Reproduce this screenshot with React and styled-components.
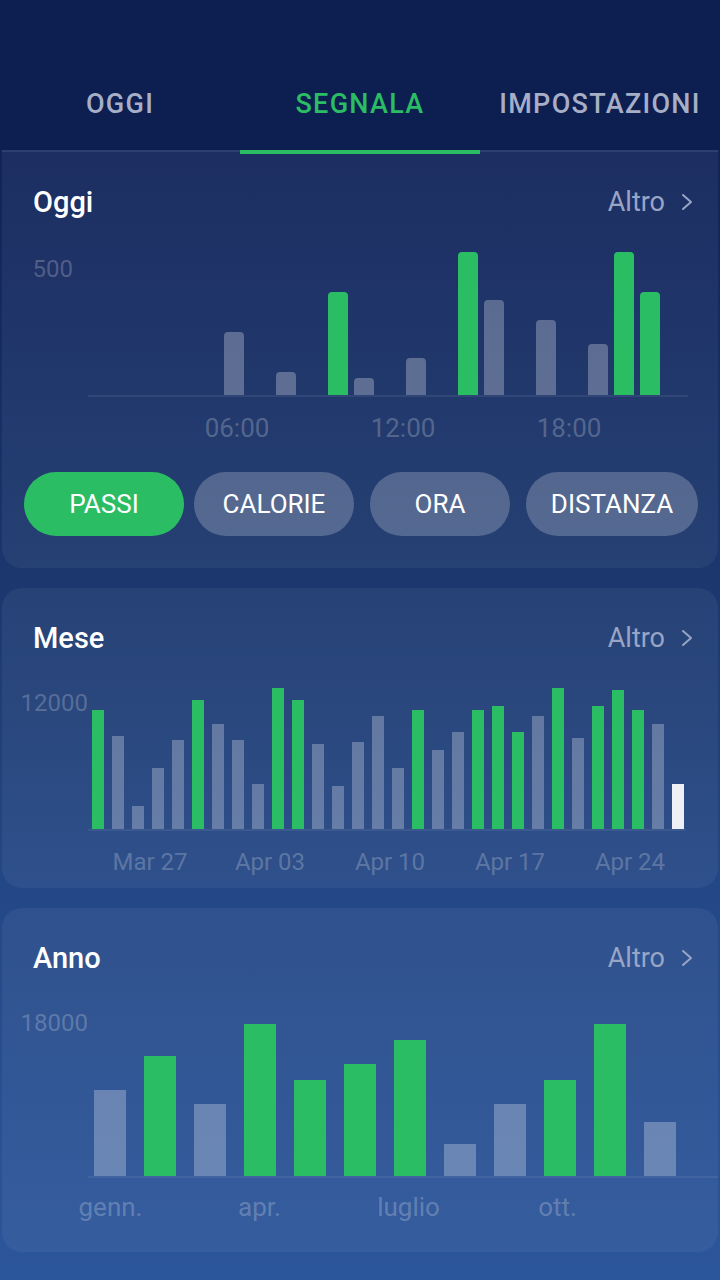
import React from "react";
import styled, { createGlobalStyle } from "styled-components";

const GREEN = "#2bbd63";

const GlobalStyle = createGlobalStyle`
  html, body {
    margin: 0;
    padding: 0;
    background: #0d1e51;
  }
  * {
    box-sizing: border-box;
  }
`;

const Page = styled.div`
  width: 720px;
  min-height: 1280px;
  font-family: Roboto, "Noto Sans", sans-serif;
  background: linear-gradient(
    180deg,
    #0d1e51 0px,
    #10235a 150px,
    #1b376d 575px,
    #244887 900px,
    #2c569b 1280px
  );
  overflow: hidden;
`;

const Header = styled.div`
  height: 150px;
  padding-top: 56px;
  background: #0d1e51;
  display: flex;
`;

const Tab = styled.div`
  position: relative;
  flex: 1;
  height: 94px;
  line-height: 96px;
  text-align: center;
  font-size: 27px;
  font-weight: 500;
  letter-spacing: 1.3px;
  color: ${(p) => (p.$active ? GREEN : "#a7afc6")};

  &::after {
    content: "";
    display: ${(p) => (p.$active ? "block" : "none")};
    position: absolute;
    left: 0;
    right: 0;
    bottom: -4px;
    height: 4px;
    background: ${GREEN};
  }
`;

const Card = styled.section`
  margin: ${(p) => (p.$first ? "0 2px" : "20px 2px 0")};
  padding: ${(p) => p.$pad};
  border-radius: ${(p) => (p.$first ? "0 0 20px 20px" : "20px")};
  background: rgba(255, 255, 255, 0.05);
  border-top: ${(p) => (p.$first ? "2px solid rgba(255,255,255,0.08)" : "none")};
`;

const TitleRow = styled.div`
  display: flex;
  justify-content: space-between;
  align-items: center;
  height: 40px;
  padding: 0 25px 0 31px;
`;

const Title = styled.h2`
  margin: 0;
  font-size: 29px;
  font-weight: 500;
  color: #ffffff;
`;

const More = styled.div`
  display: flex;
  align-items: center;
  gap: 16px;
  font-size: 27px;
  color: #98a5c6;
`;

const Chart = styled.div`
  display: flex;
  margin-top: ${(p) => p.$top}px;
  height: ${(p) => p.$height + 2}px;
`;

const Axis = styled.div`
  width: 86px;
  flex-shrink: 0;
  text-align: right;
  padding-right: ${(p) => p.$pr}px;
  font-size: 24px;
  line-height: 30px;
  color: rgba(255, 255, 255, 0.22);
`;

const AxisLabel = styled.div`
  margin-top: ${(p) => p.$offset}px;
`;

const Plot = styled.div`
  flex: 1;
  display: flex;
  align-items: flex-end;
  gap: ${(p) => p.$gap}px;
  padding-left: ${(p) => p.$pl}px;
  margin-right: ${(p) => p.$mr}px;
  border-bottom: 2px solid rgba(255, 255, 255, 0.07);
`;

const Bar = styled.div`
  flex-shrink: 0;
  width: ${(p) => p.$w}px;
  border-radius: ${(p) => (p.$round ? "4px 4px 0 0" : "0")};
  background: ${(p) =>
    p.$kind === "goal"
      ? GREEN
      : p.$kind === "today"
      ? "#eef0f5"
      : "rgba(255, 255, 255, 0.27)"};
`;

const Ticks = styled.div`
  display: flex;
  padding-left: ${(p) => p.$pl}px;
  padding-top: ${(p) => p.$pt}px;
  font-size: ${(p) => p.$size}px;
  line-height: 30px;
  color: rgba(255, 255, 255, 0.24);
`;

const Tick = styled.div`
  width: ${(p) => p.$w}px;
  text-align: center;
  flex-shrink: 0;
`;

const Pills = styled.div`
  display: flex;
  margin-top: 29px;
  padding-left: 22px;
`;

const Pill = styled.button`
  width: ${(p) => p.$w}px;
  height: 64px;
  margin-left: ${(p) => p.$ml}px;
  padding: 0;
  border: none;
  border-radius: 32px;
  font-family: Roboto, "Noto Sans", sans-serif;
  font-size: 26px;
  color: #ffffff;
  background: ${(p) => (p.$active ? GREEN : "rgba(255, 255, 255, 0.22)")};
`;

const Chevron = () => (
  <svg width="12" height="18" viewBox="0 0 12 18" fill="none">
    <path
      d="M2 2 L10 9 L2 16"
      stroke="#98a5c6"
      strokeWidth="2"
      strokeLinecap="round"
      strokeLinejoin="round"
    />
  </svg>
);

const CardHead = ({ title }) => (
  <TitleRow>
    <Title>{title}</Title>
    <More>
      Altro
      <Chevron />
    </More>
  </TitleRow>
);

// hourly steps, slots 0..21
const today = Array.from({ length: 22 }, () => ({ h: 0, kind: "rest" }));
[
  [5, 63, "rest"],
  [7, 23, "rest"],
  [9, 103, "goal"],
  [10, 17, "rest"],
  [12, 37, "rest"],
  [14, 143, "goal"],
  [15, 95, "rest"],
  [17, 75, "rest"],
  [19, 51, "rest"],
  [20, 143, "goal"],
  [21, 103, "goal"],
].forEach(([i, h, kind]) => (today[i] = { h, kind }));

const month = [
  [119, 1], [93], [23], [61], [89], [129, 1], [105], [89], [45], [141, 1],
  [129, 1], [85], [43], [87], [113], [61], [119, 1], [79], [97], [119, 1],
  [123, 1], [97, 1], [113], [141, 1], [91], [123, 1], [139, 1], [119, 1], [105], [45, 2],
].map(([h, g]) => ({ h, kind: g === 1 ? "goal" : g === 2 ? "today" : "rest" }));

const year = [
  [86], [120, 1], [72], [152, 1], [96, 1], [112, 1],
  [136, 1], [32], [72], [96, 1], [152, 1], [54],
].map(([h, g]) => ({ h, kind: g ? "goal" : "rest" }));

const filters = [
  { label: "PASSI", w: 160, ml: 0, active: true },
  { label: "CALORIE", w: 160, ml: 10 },
  { label: "ORA", w: 140, ml: 16 },
  { label: "DISTANZA", w: 172, ml: 16 },
];

export default function App() {
  return (
    <Page>
      <GlobalStyle />
      <Header>
        <Tab>OGGI</Tab>
        <Tab $active>SEGNALA</Tab>
        <Tab>IMPOSTAZIONI</Tab>
      </Header>

      <Card $first $pad="30px 0 32px">
        <CardHead title="Oggi" />
        <Chart $top={30} $height={143}>
          <Axis $pr={15}>
            <AxisLabel $offset={2}>500</AxisLabel>
          </Axis>
          <Plot $gap={6} $pl={6} $mr={30}>
            {today.map((b, i) => (
              <Bar key={i} $w={20} $round $kind={b.kind} style={{ height: b.h }} />
            ))}
          </Plot>
        </Chart>
        <Ticks $pl={152} $pt={16} $size={26}>
          {["06:00", "12:00", "18:00"].map((t) => (
            <Tick key={t} $w={166}>
              {t}
            </Tick>
          ))}
        </Ticks>
        <Pills>
          {filters.map((f) => (
            <Pill key={f.label} $w={f.w} $ml={f.ml} $active={f.active}>
              {f.label}
            </Pill>
          ))}
        </Pills>
      </Card>

      <Card $pad="30px 0 11px">
        <CardHead title="Mese" />
        <Chart $top={30} $height={141}>
          <Axis $pr={0}>
            <AxisLabel $offset={0}>12000</AxisLabel>
          </Axis>
          <Plot $gap={8} $pl={4} $mr={32}>
            {month.map((b, i) => (
              <Bar key={i} $w={12} $kind={b.kind} style={{ height: b.h }} />
            ))}
          </Plot>
        </Chart>
        <Ticks $pl={88} $pt={16} $size={24}>
          {["Mar 27", "Apr 03", "Apr 10", "Apr 17", "Apr 24"].map((t) => (
            <Tick key={t} $w={120}>
              {t}
            </Tick>
          ))}
        </Ticks>
      </Card>

      <Card $pad="30px 0 30px">
        <CardHead title="Anno" />
        <Chart $top={46} $height={152}>
          <Axis $pr={0}>
            <AxisLabel $offset={-16}>18000</AxisLabel>
          </Axis>
          <Plot $gap={18} $pl={6} $mr={0}>
            {year.map((b, i) => (
              <Bar key={i} $w={32} $kind={b.kind} style={{ height: b.h }} />
            ))}
          </Plot>
        </Chart>
        <Ticks $pl={34} $pt={14} $size={26}>
          {["genn.", "apr.", "luglio", "ott."].map((t) => (
            <Tick key={t} $w={149}>
              {t}
            </Tick>
          ))}
        </Ticks>
      </Card>
    </Page>
  );
}
